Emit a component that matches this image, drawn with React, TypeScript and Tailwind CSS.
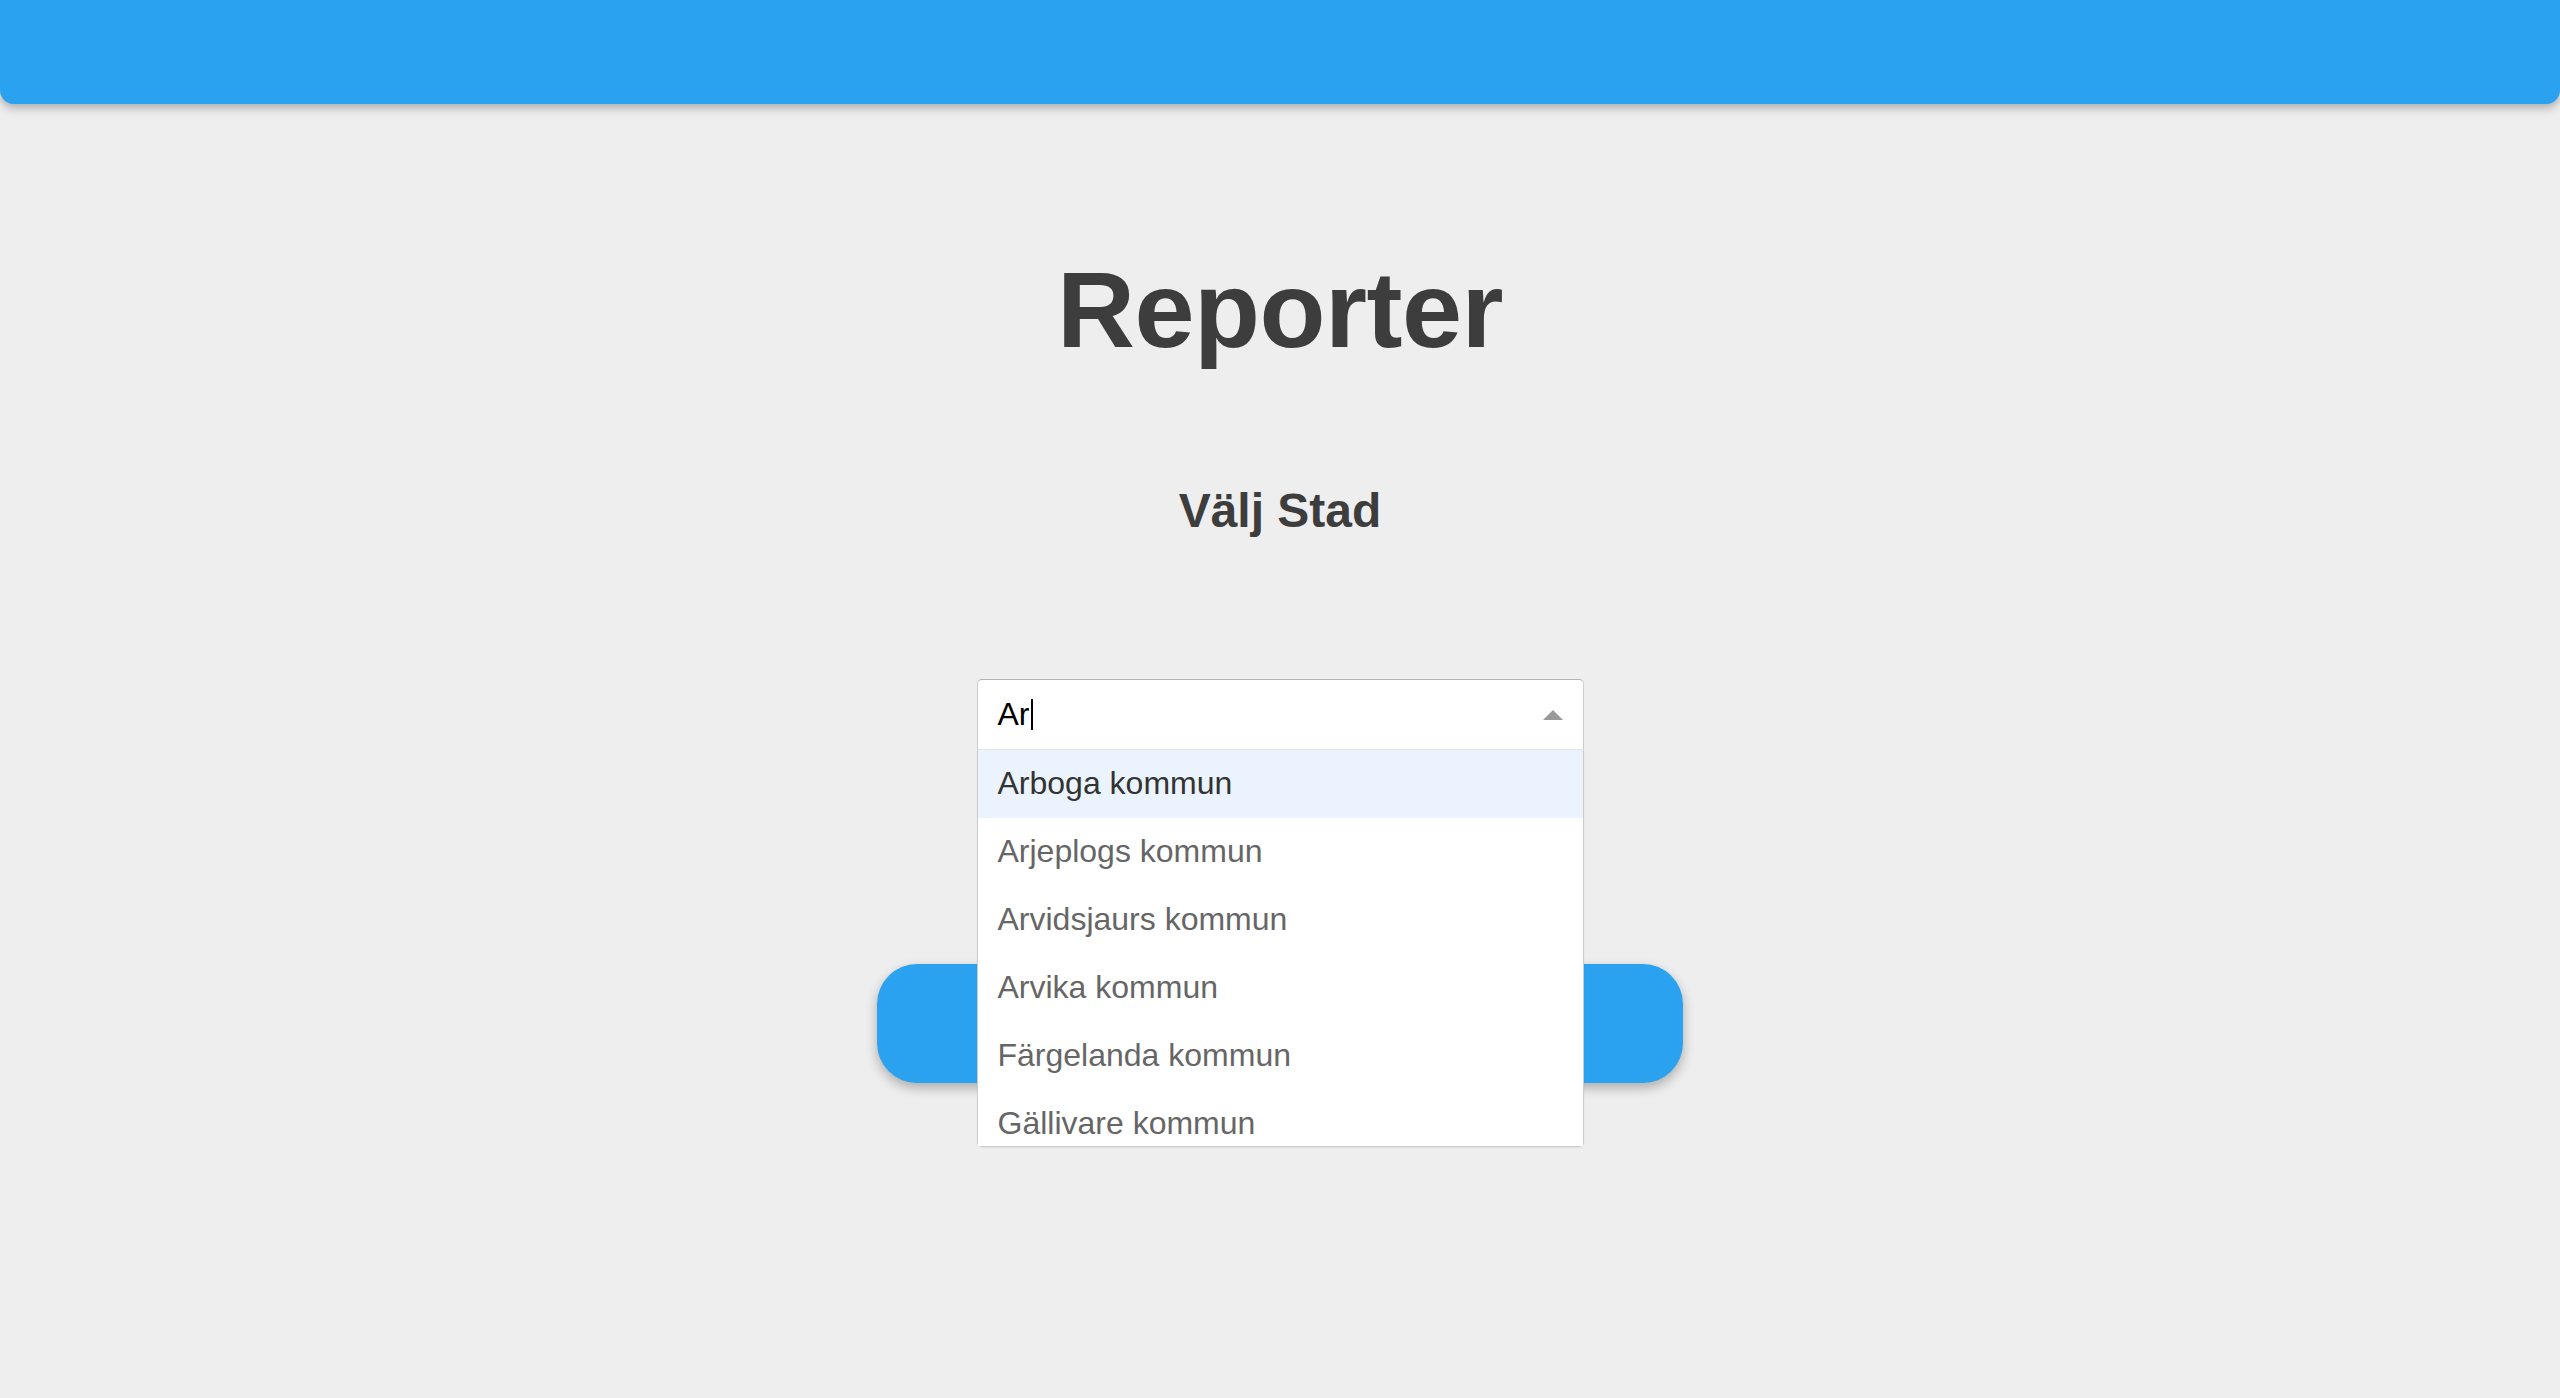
import React from "react";

const options = [
  "Arboga kommun",
  "Arjeplogs kommun",
  "Arvidsjaurs kommun",
  "Arvika kommun",
  "Färgelanda kommun",
  "Gällivare kommun",
  "Gävle kommun",
];

export default function App() {
  return (
    <div
      className="min-h-screen w-full bg-[#eeeeee] flex flex-col items-center"
      style={{ fontFamily: '"Liberation Sans", Arial, Helvetica, sans-serif' }}
    >
      <div className="w-full h-[104px] bg-[#2aa2ef] rounded-b-[14px] shadow-[0_4px_10px_rgba(0,0,0,0.28)]" />

      <h1 className="mt-[152px] text-[108px] leading-none font-bold text-[#3d3d3d] tracking-[-0.5px]">
        Reporter
      </h1>

      <h2 className="mt-[123px] text-[48px] leading-none font-bold text-[#3d3d3d]">
        Välj Stad
      </h2>

      <div className="relative mt-[144px] w-[607px] z-10">
        <div className="box-border h-[71px] bg-white border border-[#cccccc] border-t-[#b3b3b3] border-b-[#e6e6e6] rounded-t-[5px] flex items-center pl-[20px] pr-[20px]">
          <span className="text-[32px] leading-[69px] text-black">Ar</span>
          <span className="w-[2px] h-[31px] bg-black ml-[1px]" />
          <span className="flex-1" />
          <span className="w-0 h-0 border-l-[10px] border-r-[10px] border-b-[10px] border-l-transparent border-r-transparent border-b-[#999999]" />
        </div>
        <div className="absolute left-0 right-0 top-full box-border bg-white border-x border-b border-[#cccccc] rounded-b-[5px] shadow-[0_1px_2px_rgba(0,0,0,0.06)]">
          <div className="h-[396px] overflow-hidden">
            {options.map((o, i) => (
              <div
                key={o}
                className={
                  i === 0
                    ? "h-[68px] pl-[20px] text-[32px] leading-[66px] text-[#333333] bg-[#ebf3fe]"
                    : "h-[68px] pl-[20px] text-[32px] leading-[66px] text-[#666666] bg-white"
                }
              >
                {o}
              </div>
            ))}
          </div>
        </div>
      </div>

      <button className="mt-[214px] w-[806px] h-[119px] rounded-[40px] bg-[#2aa2ef] shadow-[0_5px_12px_rgba(0,0,0,0.28)]" />
    </div>
  );
}
